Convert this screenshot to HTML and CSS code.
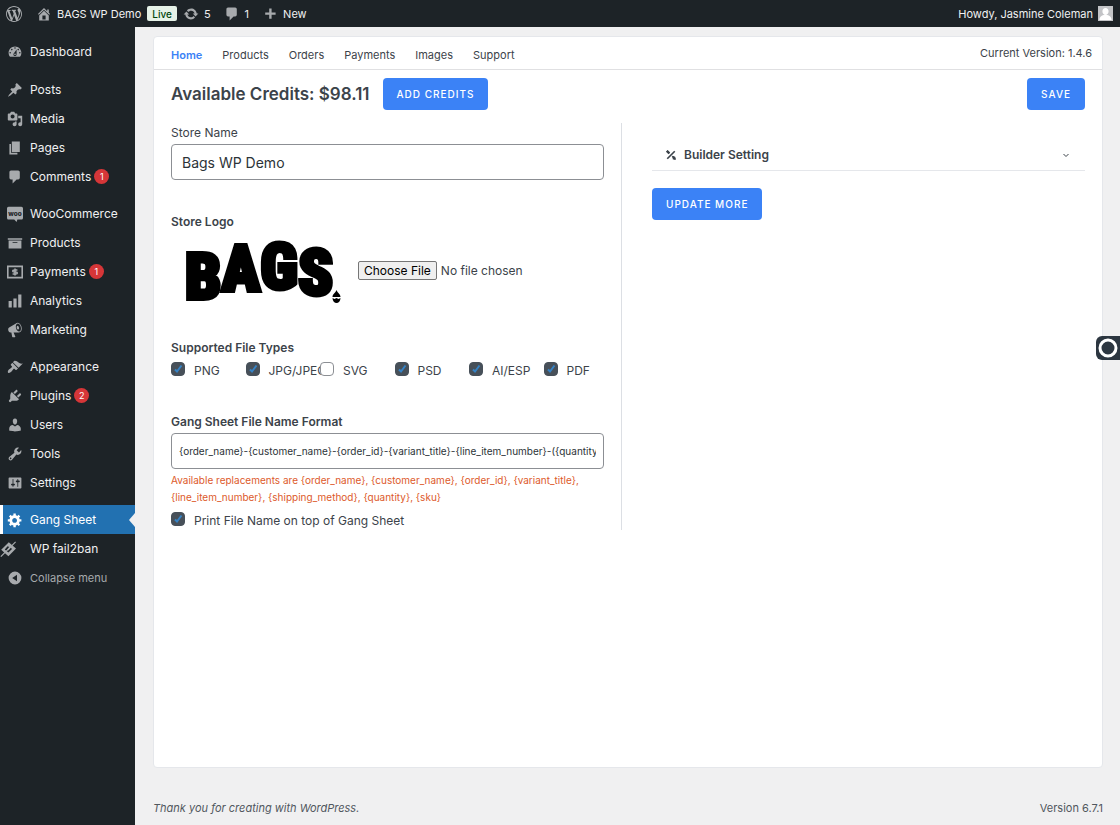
FILE: index.html
```html
<!DOCTYPE html>
<html lang="en">
  <head>
    <meta charset="utf-8" />
    <meta name="viewport" content="width=device-width, initial-scale=1" />
    <title>Gang Sheet - BAGS WP Demo</title>
    <link rel="stylesheet" href="styles.css" />
  </head>
  <body>
    <header class="adminbar">
      <a href="#" class="wp-logo" aria-label="WordPress">
        <svg class="icon" viewBox="0 0 20 20"><path d="M20 10c0-5.51-4.49-10-10-10C4.48 0 0 4.49 0 10c0 5.52 4.48 10 10 10 5.51 0 10-4.48 10-10zM7.78 15.37L4.37 6.22c.55-.02 1.17-.08 1.17-.08.5-.06.44-1.13-.06-1.11 0 0-1.45.11-2.37.11-.18 0-.37 0-.58-.01C4.12 2.69 6.87 1.11 10 1.11c2.33 0 4.45.87 6.05 2.34-.68-.11-1.65.39-1.65 1.58 0 .74.45 1.36.9 2.1.35.61.55 1.36.55 2.46 0 1.49-1.4 5-1.4 5l-3.03-8.37c.54-.02.82-.17.82-.17.5-.05.44-1.25-.06-1.22 0 0-1.44.12-2.38.12-.87 0-2.33-.12-2.33-.12-.5-.03-.56 1.2-.06 1.22l.92.08 1.26 3.41zM17.41 10c.24-.64.74-1.87.43-4.25.7 1.29 1.05 2.71 1.05 4.25 0 3.29-1.73 6.24-4.4 7.78.97-2.59 1.94-5.2 2.92-7.78zM6.1 18.09C3.12 16.65 1.11 13.53 1.11 10c0-1.3.23-2.48.72-3.59C3.25 10.3 4.67 14.2 6.1 18.09zm4.03-6.63l2.58 6.98c-.86.29-1.76.45-2.71.45-.79 0-1.57-.11-2.29-.33.81-2.38 1.62-4.74 2.42-7.1z" /></svg>
      </a>
      <a href="#" class="site">
        <svg class="icon" viewBox="0 0 20 20"><path d="M16 8.5l1.53 1.53-1.06 1.06L10 4.6l-6.47 6.49-1.06-1.06L10 2.5l4 4v-2h2v4zm-6-2.46l6 5.99V18H4v-5.97zM12 17v-5H8v5h4z" /></svg>
        BAGS WP Demo
      </a>
      <a href="#" class="live">Live</a>
      <a href="#" class="updates">
        <svg class="icon" viewBox="0 0 20 20"><path d="M10.2 3.28c3.53 0 6.43 2.61 6.92 6h2.08l-3.5 4-3.5-4h2.32c-.45-1.97-2.21-3.45-4.32-3.45-1.45 0-2.73.71-3.54 1.78L4.95 5.66C6.23 4.2 8.11 3.28 10.2 3.28zm-.4 13.44c-3.52 0-6.43-2.61-6.92-6H.8l3.5-4c1.17 1.33 2.33 2.67 3.5 4H5.48c.45 1.97 2.21 3.45 4.32 3.45 1.45 0 2.73-.71 3.54-1.78l1.71 1.95c-1.28 1.46-3.15 2.38-5.25 2.38z" /></svg>
        5
      </a>
      <a href="#" class="comments">
        <svg class="icon" viewBox="0 0 20 20"><path d="M5 2h9c1.1 0 2 .9 2 2v7c0 1.1-.9 2-2 2h-2l-5 5v-5H5c-1.1 0-2-.9-2-2V4c0-1.1.9-2 2-2z" /></svg>
        1
      </a>
      <a href="#" class="new">
        <svg class="icon" viewBox="0 0 20 20"><path d="M17 8v3h-5v5H9v-5H4V8h5V3h3v5h5z" /></svg>
        New
      </a>
      <a href="#" class="account">
        Howdy, Jasmine Coleman
        <svg class="avatar" viewBox="0 0 16 16"><path fill="#c3c4c7" d="M0 0h16v16H0z" /><path fill="#fff" d="M8 2c2 0 3.300 1.500 3.300 3.500S10 9.500 8 9.500 4.700 7.500 4.700 5.500 6 2 8 2zM1.500 15c0-3.500 2.500-5 4.500-5.500h4c2 .5 4.500 2 4.500 5.500z" /></svg>
      </a>
    </header>

    <div class="wrap">
      <nav class="menu">
        <ul class="first">
          <li><a href="#"><svg class="icon" viewBox="0 0 20 20"><path d="M3.76 16h12.48c1.1-1.37 1.76-3.11 1.76-5 0-4.42-3.58-8-8-8s-8 3.58-8 8c0 1.89.66 3.63 1.76 5zM10 4c.55 0 1 .45 1 1s-.45 1-1 1-1-.45-1-1 .45-1 1-1zM6 6c.55 0 1 .45 1 1s-.45 1-1 1-1-.45-1-1 .45-1 1-1zm8 0c.55 0 1 .45 1 1s-.45 1-1 1-1-.45-1-1 .45-1 1-1zm-5.370 5.550L12 7v6c0 1.100-.9 2-2 2s-2-.9-2-2c0-.57.24-1.080.63-1.450zM4 10c.55 0 1 .45 1 1s-.45 1-1 1-1-.45-1-1 .45-1 1-1zm12 0c.55 0 1 .45 1 1s-.45 1-1 1-1-.45-1-1 .45-1 1-1zm-5 3c0-.55-.45-1-1-1s-1 .45-1 1 .45 1 1 1 1-.45 1-1z" /></svg>Dashboard</a></li>
        </ul>
        <ul>
          <li><a href="#"><svg class="icon" viewBox="0 0 20 20"><path d="M10.440 3.020l1.820-1.820 6.360 6.350-1.830 1.820c-1.050-.68-2.480-.57-3.410.36l-.75.75c-.92.93-1.040 2.350-.35 3.410l-1.830 1.820-2.410-2.410-2.800 2.790c-.42.42-3.380 2.710-3.800 2.290s1.860-3.390 2.280-3.810l2.790-2.790L4.100 9.360l1.830-1.820c1.050.69 2.480.57 3.400-.36l.75-.75c.93-.92 1.050-2.350.36-3.410z" /></svg>Posts</a></li>
          <li><a href="#"><svg class="icon" viewBox="0 0 20 20"><path d="M13 11V4c0-.55-.45-1-1-1h-1.670L9 1H5L3.670 3H2c-.55 0-1 .45-1 1v7c0 .55.45 1 1 1h10c.55 0 1-.45 1-1zM7 4.500c1.380 0 2.500 1.120 2.500 2.500S8.380 9.500 7 9.500 4.500 8.380 4.500 7 5.620 4.500 7 4.500zM14 6h5v10.500c0 1.380-1.120 2.500-2.500 2.500S14 17.880 14 16.500s1.120-2.500 2.500-2.500c.17 0 .34.02.5.05V9h-3V6zm-4 8.050V13h2v3.500c0 1.380-1.120 2.500-2.500 2.500S7 17.880 7 16.500 8.120 14 9.500 14c.17 0 .34.02.5.05z" /></svg>Media</a></li>
          <li><a href="#"><svg class="icon" viewBox="0 0 20 20"><path d="M6 15V2h10v13H6zm-1 1h8v2H3V5h2v11z" /></svg>Pages</a></li>
          <li><a href="#"><svg class="icon" viewBox="0 0 20 20"><path d="M5 2h9c1.100 0 2 .9 2 2v7c0 1.100-.9 2-2 2h-2l-5 5v-5H5c-1.100 0-2-.9-2-2V4c0-1.100.9-2 2-2z" /></svg>Comments <span class="count">1</span></a></li>
        </ul>
        <ul>
          <li><a href="#"><svg class="icon" viewBox="0 0 20 20"><path d="M2 1h16c1.100 0 2 .9 2 2v12c0 1.100-.9 2-2 2h-5l-1 3-3-3H2c-1.100 0-2-.9-2-2V3c0-1.100.9-2 2-2z" /><text class="woo" x="10" y="12" text-anchor="middle">woo</text></svg>WooCommerce</a></li>
          <li><a href="#"><svg class="icon" viewBox="0 0 20 20"><path d="M19 4v2H1V4h18zM2 7h16v10H2V7zm11 3V9H7v1h6z" /></svg>Products</a></li>
          <li><a href="#"><svg class="icon" viewBox="0 0 20 20"><path fill-rule="evenodd" d="M0 2h20v16H0zM2 4v12h16V4z" /><path fill="none" stroke="currentColor" stroke-width="2" d="M13 7.500H9c-2.500 0-2.500 2.500 0 2.500h2c2.500 0 2.500 2.500 0 2.500H7M10 5.500v9" /></svg>Payments <span class="count">1</span></a></li>
          <li><a href="#"><svg class="icon" viewBox="0 0 20 20"><path d="M18 18V2h-4v16h4zm-6 0V7H8v11h4zm-6 0v-8H2v8h4z" /></svg>Analytics</a></li>
          <li><a href="#"><svg class="icon" viewBox="0 0 20 20"><path d="M18.150 5.940c.46 1.620.38 3.220-.02 4.480-.42 1.280-1.260 2.180-2.300 2.480-.16.06-.26.06-.4.06-.06.02-.12.02-.18.02-.06.02-.14.02-.22.02h-6.800l2.220 5.500c.02.14-.06.26-.14.34-.08.1-.24.16-.34.16H6.950c-.1 0-.26-.06-.34-.16-.08-.08-.16-.2-.14-.34l-1-5.500H4.250l-.02-.02c-.5.06-1.080-.18-1.540-.62s-.88-1.080-1.060-1.880c-.24-.8-.2-1.560-.02-2.200.18-.62.58-1.080 1.060-1.300l.02-.02 9-5.400c.1-.06.18-.1.24-.16.06-.04.14-.08.24-.12.16-.08.28-.12.5-.18 1.040-.3 2.240.1 3.220.98s1.840 2.240 2.260 3.860zm-2.580 5.980h-.02c.4-.1.74-.34 1.040-.7.58-.7.86-1.760.86-3.040 0-.64-.1-1.300-.28-1.980-.34-1.360-1.020-2.500-1.780-3.240s-1.680-1.100-2.460-.88c-.82.22-1.400.96-1.700 2-.32 1.040-.28 2.360.06 3.720.38 1.360 1 2.500 1.800 3.240.78.74 1.620 1.100 2.480.88zm-2.540-7.080c.22-.04.42-.02.62.04.38.16.76.48 1.020 1s.42 1.200.42 1.780c0 .3-.04.56-.12.8-.18.48-.44.84-.86.94-.34.1-.8-.06-1.140-.4s-.64-.86-.78-1.500c-.18-.62-.12-1.240.02-1.720s.48-.84.82-.94z" /></svg>Marketing</a></li>
        </ul>
        <ul>
          <li><a href="#"><svg class="icon" viewBox="0 0 20 20"><path d="M14.480 11.060L7.410 3.990l1.500-1.500c.5-.56 2.300-.47 3.510.32 1.210.8 1.430 1.280 2.910 2.100 1.180.64 2.450 1.260 4.450.85zm-.71.71L6.700 4.700 4.930 6.470c-.39.39-.39 1.020 0 1.410l1.060 1.060c.39.39.39 1.030 0 1.420-.6.6-1.430 1.110-2.210 1.690-.35.26-.7.53-1.010.84C1.430 14.230.4 16.080 1.400 17.070c.99 1 2.840-.03 4.180-1.360.31-.31.58-.66.85-1.020.57-.78 1.080-1.610 1.690-2.210.39-.39 1.020-.39 1.410 0l1.060 1.060c.39.39 1.020.39 1.410 0z" /></svg>Appearance</a></li>
          <li><a href="#"><svg class="icon" viewBox="0 0 20 20"><path d="M13.110 4.360L9.870 7.600 8 5.730l3.240-3.240c.35-.34 1.050-.2 1.560.32.52.51.66 1.210.31 1.550zm-8 1.770l.91-1.120 9.010 9.010-1.190.84c-.71.71-2.630 1.160-3.820 1.160H6.140L4.900 17.260c-.59.59-1.540.59-2.120 0-.59-.58-.59-1.530 0-2.120l1.240-1.240v-3.880c0-1.130.4-3.190 1.090-3.890zm7.260 3.970l3.240-3.240c.34-.35 1.040-.21 1.550.31.52.51.66 1.210.31 1.550l-3.240 3.250z" /></svg>Plugins <span class="count">2</span></a></li>
          <li><a href="#"><svg class="icon" viewBox="0 0 20 20"><path d="M10 9.250c-2.270 0-2.730-3.440-2.730-3.440C7 4.020 7.820 2 9.970 2c2.160 0 2.980 2.020 2.710 3.810 0 0-.41 3.440-2.680 3.440zm0 2.570L12.720 10c2.390 0 4.520 2.330 4.520 4.530v2.490s-3.650 1.130-7.240 1.130c-3.650 0-7.240-1.130-7.240-1.130v-2.490c0-2.250 1.940-4.480 4.470-4.480z" /></svg>Users</a></li>
          <li><a href="#"><svg class="icon" viewBox="0 0 20 20"><path d="M16.680 9.770c-1.340 1.340-3.300 1.670-4.950.99l-5.410 6.520c-.99.99-2.590.99-3.580 0s-.99-2.590 0-3.570l6.520-5.420c-.68-1.650-.35-3.610.99-4.950 1.280-1.280 3.120-1.620 4.720-1.060l-2.890 2.890 2.820 2.820 2.860-2.870c.53 1.580.18 3.390-1.080 4.650zM3.810 16.210c.4.39 1.040.39 1.430 0 .4-.4.4-1.040 0-1.430-.39-.4-1.030-.4-1.430 0-.39.39-.39 1.030 0 1.430z" /></svg>Tools</a></li>
          <li><a href="#"><svg class="icon" viewBox="0 0 20 20"><path d="M18 16V4c0-.55-.45-1-1-1H3c-.55 0-1 .45-1 1v12c0 .55.45 1 1 1h14c.55 0 1-.45 1-1zM8 11h1c.55 0 1 .45 1 1s-.45 1-1 1H8v1.500c0 .28-.22.5-.5.5s-.5-.22-.5-.5V13H6c-.55 0-1-.45-1-1s.45-1 1-1h1V5.500c0-.28.22-.5.5-.5s.5.22.5.5V11zm5-2h-1c-.55 0-1-.45-1-1s.45-1 1-1h1V5.500c0-.28.22-.5.5-.5s.5.22.5.5V7h1c.55 0 1 .45 1 1s-.45 1-1 1h-1v5.500c0 .28-.22.5-.5.5s-.5-.22-.5-.5V9z" /></svg>Settings</a></li>
        </ul>
        <ul>
          <li class="current"><a href="#"><svg class="icon" viewBox="0 0 20 20"><path d="M18 12h-2.180c-.17.7-.44 1.350-.81 1.930l1.540 1.540-2.100 2.100-1.540-1.540c-.58.36-1.230.63-1.910.79V19H8v-2.180c-.68-.16-1.330-.43-1.910-.79l-1.540 1.540-2.120-2.120 1.540-1.540c-.36-.58-.63-1.230-.79-1.910H1V9.030h2.170c.16-.7.44-1.350.8-1.940L2.430 5.550l2.100-2.100 1.540 1.540c.58-.37 1.240-.64 1.930-.81V2h3v2.180c.68.16 1.330.43 1.910.79l1.540-1.540 2.120 2.120-1.540 1.540c.36.59.64 1.240.8 1.940H18V12zm-8.500 1.500c1.660 0 3-1.340 3-3s-1.340-3-3-3-3 1.340-3 3 1.340 3 3 3z" /></svg>Gang Sheet</a></li>
          <li class="fail2ban"><a href="#"><svg class="icon" viewBox="0 0 20 20"><path fill-rule="evenodd" d="M11 1.500l9 8-9.500 9.500-9-8zM9.500 6.500L6 10.500l4.500 4 4.500-4.500-1.500-1.500-3 3.500-1.500-1.500 2.500-3z" /><path fill="none" stroke="currentColor" stroke-width="1.500" d="M1 19.500L19.500 1" /></svg>WP fail2ban</a></li>
        </ul>
        <button type="button" class="collapse">
          <svg class="icon" viewBox="0 0 20 20"><path fill-rule="evenodd" d="M10 2a8 8 0 1 1 0 16 8 8 0 0 1 0-16zm2.500 4L6.500 10l6 4z" /></svg>
          Collapse menu
        </button>
      </nav>

      <div class="content">
        <main class="card">
          <div class="tabs">
            <nav>
              <a href="#" class="active">Home</a>
              <a href="#">Products</a>
              <a href="#">Orders</a>
              <a href="#">Payments</a>
              <a href="#">Images</a>
              <a href="#">Support</a>
            </nav>
            <p>Current Version: 1.4.6</p>
          </div>

          <form class="settings">
            <div class="top">
              <h1>Available Credits: $98.11</h1>
              <button type="button" class="btn">ADD CREDITS</button>
              <button type="button" class="btn save">SAVE</button>
            </div>

            <div class="columns">
              <div class="left">
                <label class="label" for="storeName">Store Name</label>
                <input type="text" id="storeName" class="field" value="Bags WP Demo" />

                <label class="label bold" for="storeLogo">Store Logo</label>
                <div class="logo-row">
                  <svg class="logo" viewBox="0 0 170 74" role="img" aria-label="BAGS.">
                    <text x="14" y="66 58 56 62">BAGS</text>
                    <path d="M165.500 57c1 3 4 4 4 7h-8c0-3 3-4 4-7zM161.500 65l2 1 2-1 2 1 2-1c0 3-2 5-4 5s-4-2-4-5z" />
                  </svg>
                  <input type="file" id="storeLogo" />
                </div>

                <fieldset>
                  <legend class="label bold">Supported File Types</legend>
                  <div class="types">
                    <label><input type="checkbox" checked />PNG</label>
                    <label><input type="checkbox" checked />JPG/JPEG</label>
                    <label><input type="checkbox" />SVG</label>
                    <label><input type="checkbox" checked />PSD</label>
                    <label><input type="checkbox" checked />AI/ESP</label>
                    <label><input type="checkbox" checked />PDF</label>
                  </div>
                </fieldset>

                <label class="label bold" for="nameFormat">Gang Sheet File Name Format</label>
                <input type="text" id="nameFormat" class="field small" value="{order_name}-{customer_name}-{order_id}-{variant_title}-{line_item_number}-({quantity})" />
                <p class="hint">
                  Available replacements are {order_name}, {customer_name}, {order_id}, {variant_title}, {line_item_number}, {shipping_method}, {quantity}, {sku}
                </p>
                <label class="check"><input type="checkbox" checked />Print File Name on top of Gang Sheet</label>
              </div>

              <div class="divider"></div>

              <div class="right">
                <button type="button" class="accordion" aria-expanded="false">
                  <svg class="tools" viewBox="0 0 12 12"><path fill="none" stroke="currentColor" stroke-width="2" d="M1.500 10.500l9-9M1 1l3 3M7.500 7.500l3 3" /><path d="M0 2l2-2 3 3-2 2zM8 7l3 1 1 3-1 1-3-1z" /></svg>
                  Builder Setting
                  <svg class="chevron" viewBox="0 0 8 8"><path fill="none" stroke="currentColor" d="M1.500 3L4 5.500 6.500 3" /></svg>
                </button>
                <button type="button" class="btn">UPDATE MORE</button>
              </div>
            </div>
          </form>
        </main>

        <footer>
          <em>Thank you for creating with <a href="#">WordPress</a>.</em>
          <span>Version 6.7.1</span>
        </footer>
      </div>
    </div>

    <button type="button" class="widget" aria-label="Open widget">
      <svg viewBox="0 0 20 20"><circle cx="10" cy="10" r="8" fill="none" stroke="#fff" stroke-width="3" /></svg>
    </button>
  </body>
</html>
```
FILE: styles.css
```css
* {
  box-sizing: border-box;
}
body {
  margin: 0;
  min-height: 100vh;
  display: flex;
  flex-direction: column;
  background-color: #f0f0f1;
  color: #3c434a;
  font-family: Inter, "Liberation Sans", sans-serif;
  font-size: 12px;
  line-height: 16px;
}
a {
  color: inherit;
  text-decoration: none;
}
button,
input {
  font-family: inherit;
  color: inherit;
}
ul {
  list-style: none;
  margin: 0 0 8px;
  padding: 0;
}
p,
h1 {
  margin: 0;
}
.icon {
  width: 16px;
  height: 16px;
  flex: none;
  fill: currentColor;
  color: #a7aaad;
}

/* top bar */
.adminbar {
  display: flex;
  align-items: center;
  height: 27px;
  padding: 0 7px 0 6px;
  background-color: #1d2327;
  color: #f0f0f1;
  font-size: 11px;
}
.adminbar a {
  display: flex;
  align-items: center;
  gap: 5px;
}
.adminbar .site {
  margin-left: 14px;
}
.adminbar .live {
  margin: 0 6px;
  height: 15px;
  padding: 0 5px;
  border-radius: 2px;
  background-color: #e6f2e8;
  color: #00450c;
  font-size: 10px;
  font-weight: 500;
}
.adminbar .comments {
  margin-left: 13px;
}
.adminbar .new {
  margin-left: 13px;
}
.adminbar .account {
  margin-left: auto;
}
.avatar {
  width: 15px;
  height: 15px;
}

/* side menu */
.wrap {
  flex: 1;
  display: flex;
}
.menu {
  width: 135px;
  flex: none;
  padding-top: 10px;
  background-color: #1d2327;
  color: #f0f0f1;
}
.menu .first {
  margin-bottom: 9px;
}
.menu a,
.collapse {
  display: flex;
  align-items: center;
  gap: 7px;
  height: 29px;
  padding-left: 7px;
}
.menu .current {
  position: relative;
  background-color: #2271b1;
  color: #fff;
  box-shadow: inset 3px 0 #fff;
}
.menu .current .icon {
  color: #fff;
}
.menu .current::after {
  content: "";
  position: absolute;
  right: 0;
  top: 8px;
  border: 7px solid transparent;
  border-left: 0;
  border-right: 6px solid #f0f0f1;
}
.menu .fail2ban a {
  padding-left: 0;
  gap: 14px;
}
.count {
  width: 15px;
  height: 15px;
  margin-left: -4px;
  border-radius: 50%;
  background-color: #d63638;
  color: #fff;
  font-size: 9px;
  line-height: 15px;
  text-align: center;
}
.woo {
  fill: #1d2327;
  font-size: 8px;
  font-weight: 800;
}
.collapse {
  margin-top: -8px;
  border: 0;
  background: none;
  color: #a7aaad;
  font-size: 11px;
}

/* page */
.content {
  flex: 1;
  min-width: 0;
  display: flex;
  flex-direction: column;
  padding: 9px 17px 0 18px;
}
.card {
  flex: 1;
  border: 1px solid #e5e7eb;
  border-radius: 4px;
  background-color: #fff;
}
.tabs {
  display: flex;
  justify-content: space-between;
  align-items: center;
  height: 33px;
  padding: 0 10px 0 17px;
  border-bottom: 1px solid #e0e0e2;
  font-size: 11px;
}
.tabs nav {
  display: flex;
  gap: 20px;
  padding-top: 4px;
}
.tabs .active {
  color: #3b82f6;
  font-weight: 600;
}
.settings {
  padding: 8px 17px;
}
.top {
  display: flex;
  align-items: center;
}
h1 {
  margin-right: 13px;
  font-size: 17px;
  font-weight: 600;
}
.btn {
  height: 32px;
  padding: 0 14px;
  border: 0;
  border-radius: 4px;
  background-color: #3b82f6;
  color: #fff;
  font-size: 10px;
  font-weight: 500;
  letter-spacing: 1px;
}
.save {
  margin-left: auto;
}
.columns {
  display: grid;
  grid-template-columns: 1fr auto 1fr;
  margin-top: 13px;
}
.left,
.right {
  min-width: 0;
}
.left {
  padding-top: 2px;
}
.divider {
  width: 1px;
  margin: 0 30px 0 17px;
  background-color: #dcdfe4;
}
.label {
  display: block;
  padding: 0;
  margin-bottom: 3px;
}
.bold {
  font-weight: 600;
}
.field {
  display: block;
  width: 100%;
  height: 36px;
  padding: 0 10px;
  border: 1px solid #8c8f94;
  border-radius: 4px;
  background-color: #fff;
  color: #2c3338;
  font-size: 14px;
}
.small {
  padding: 0 7px;
  font-size: 10px;
}
#storeName {
  margin-bottom: 34px;
}
.logo-row {
  display: flex;
  align-items: center;
  gap: 17px;
  height: 74px;
  margin-bottom: 33px;
}
.logo {
  flex: none;
  width: 170px;
  height: 74px;
  overflow: visible;
}
.logo text {
  font-family: "Roboto Condensed", "Liberation Sans Narrow", "Liberation Sans", sans-serif;
  font-size: 64px;
  font-weight: 900;
  stroke: #000;
  stroke-width: 4px;
}
input[type="file"] {
  min-width: 0;
  font-size: 12px;
}
input[type="file"]::file-selector-button {
  margin-right: 4px;
  padding: 1px 5px;
  border: 1px solid #767676;
  border-radius: 2px;
  background-color: #efefef;
  color: #000;
  font-family: inherit;
}
fieldset {
  margin: 0 0 34px;
  padding: 0;
  border: 0;
}
.types {
  display: grid;
  grid-template-columns: repeat(6, 1fr);
  margin: 3px -14px 0 0;
}
.types label,
.check {
  display: flex;
  gap: 9px;
  line-height: 18px;
}
.types label {
  min-width: 0;
}
input[type="checkbox"] {
  appearance: none;
  flex: none;
  width: 14px;
  height: 14px;
  margin: 0;
  border: 1px solid #8c8f94;
  border-radius: 4px;
  background-color: #fff;
}
input[type="checkbox"]:checked {
  border-color: #475059;
  background: #475059 url("data:image/svg+xml,%3Csvg xmlns='http://www.w3.org/2000/svg' viewBox='0 0 12 12'%3E%3Cpath fill='none' stroke='%233582c4' stroke-width='2' d='M3 6.500l2 2 4.500-6'/%3E%3C/svg%3E") center / 12px no-repeat;
}
.hint {
  margin: 3px 0 6px;
  color: #dd5a2b;
  font-size: 10px;
  line-height: 17px;
}
.accordion {
  display: flex;
  align-items: center;
  width: 100%;
  height: 32px;
  margin: 16px 0 17px;
  padding: 0 15px 0 14px;
  border: 0;
  border-bottom: 1px solid #e5e7eb;
  background: none;
  font-size: 12px;
  font-weight: 600;
}
.tools {
  width: 10px;
  height: 10px;
  margin-right: 8px;
  fill: currentColor;
}
.chevron {
  width: 8px;
  height: 8px;
  margin-left: auto;
}
footer {
  display: flex;
  justify-content: space-between;
  padding: 32px 0 9px;
  color: #50575e;
  font-size: 11px;
}
.widget {
  position: fixed;
  right: 0;
  top: 336px;
  width: 24px;
  height: 24px;
  padding: 2px 0 2px 2px;
  border: 0;
  border-radius: 6px 0 0 6px;
  background-color: #2c3640;
}
.widget svg {
  display: block;
  width: 20px;
  height: 20px;
}
```
